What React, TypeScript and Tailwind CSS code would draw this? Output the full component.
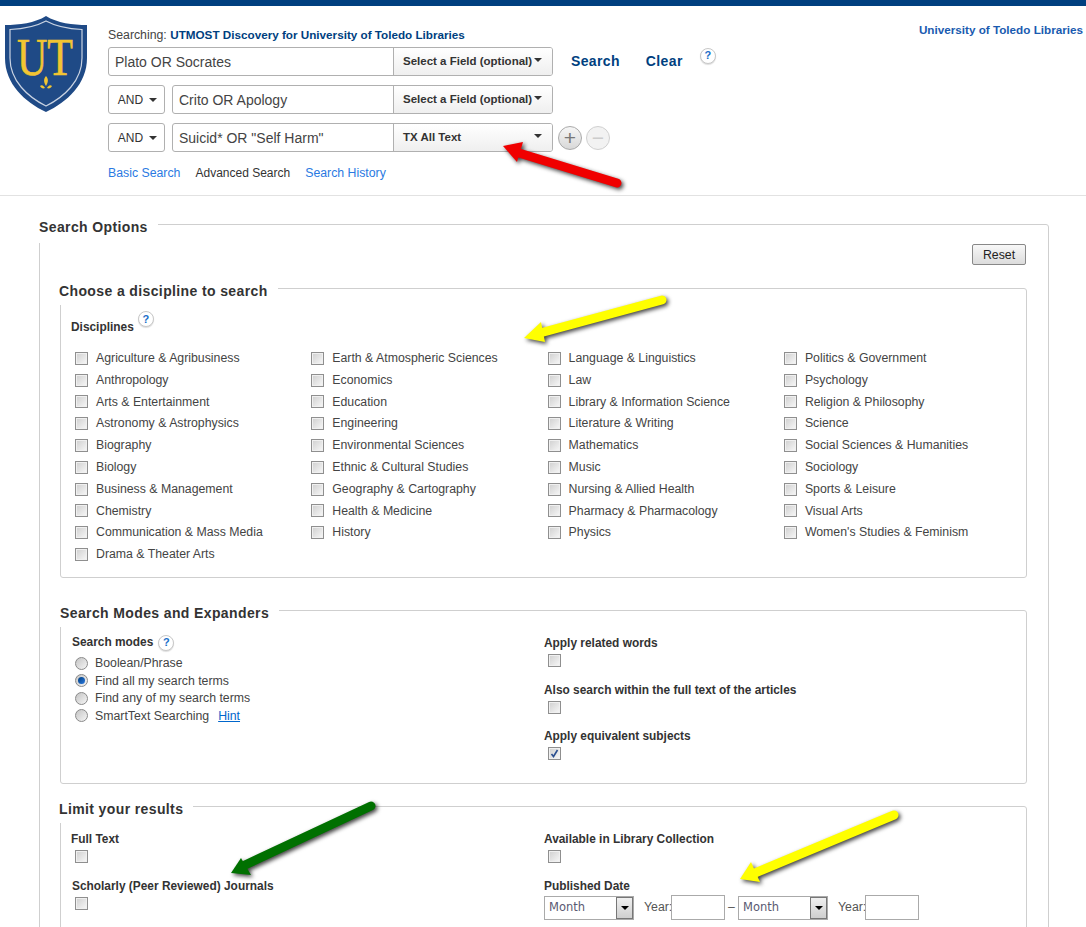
import React from "react";

const columns = [
  ["Agriculture & Agribusiness", "Anthropology", "Arts & Entertainment", "Astronomy & Astrophysics", "Biography", "Biology", "Business & Management", "Chemistry", "Communication & Mass Media", "Drama & Theater Arts"],
  ["Earth & Atmospheric Sciences", "Economics", "Education", "Engineering", "Environmental Sciences", "Ethnic & Cultural Studies", "Geography & Cartography", "Health & Medicine", "History"],
  ["Language & Linguistics", "Law", "Library & Information Science", "Literature & Writing", "Mathematics", "Music", "Nursing & Allied Health", "Pharmacy & Pharmacology", "Physics"],
  ["Politics & Government", "Psychology", "Religion & Philosophy", "Science", "Social Sciences & Humanities", "Sociology", "Sports & Leisure", "Visual Arts", "Women's Studies & Feminism"],
];

const Checkbox = ({ checked }: { checked?: boolean }) => (
  <span className="flex h-[13px] w-[13px] shrink-0 items-center justify-center border border-[#8f8f8f] bg-gradient-to-br from-[#cfcfcf] to-[#f8f8f8] shadow-[inset_0_0_0_1px_#f0f0f0]">
    {checked && (
      <svg viewBox="0 0 11 11" className="h-[11px] w-[11px]">
        <path d="M2.5 6 L4.5 8.5 L8.5 2" fill="none" stroke="#2b4f8f" strokeWidth="1.6" />
      </svg>
    )}
  </span>
);

const Radio = ({ checked }: { checked?: boolean }) => (
  <span className="flex h-[13px] w-[13px] shrink-0 items-center justify-center rounded-full border border-[#8a8a8a] bg-gradient-to-br from-[#c4c4c4] to-[#f6f6f6]">
    {checked && <span className="h-[7px] w-[7px] rounded-full bg-gradient-to-br from-[#003f7f] to-[#2a7ae2]" />}
  </span>
);

const Help = () => (
  <span className="flex h-[16px] w-[16px] items-center justify-center rounded-full border border-[#c8c8c8] bg-white text-[11px] font-bold leading-none text-[#1a6fc9] shadow-[0_1px_1px_#ddd]">
    ?
  </span>
);

const Caret = () => <span className="block h-0 w-0 border-x-[4px] border-t-[4px] border-x-transparent border-t-[#333]" />;

const Section = ({ title, legendClass, className, children }: { title: string; legendClass: string; className: string; children: React.ReactNode }) => (
  <div className={`rounded-[3px] border border-[#cfcfcf] ${className}`}>
    <div className={`w-fit bg-white pr-[10px] text-[14px] font-bold leading-[18px] tracking-[0.38px] text-[#333] ${legendClass}`}>{title}</div>
    {children}
  </div>
);

const FieldSelect = ({ label }: { label: string }) => (
  <div className="flex h-full w-[159px] shrink-0 items-center justify-between border-l border-[#b0b0b0] bg-gradient-to-b from-white to-[#efefef] pl-[9px] pr-[10px] text-[11.5px] font-bold text-[#333]">
    <span className="whitespace-nowrap pt-[1px]">{label}</span>
    <span className="-mt-[4px]">
      <Caret />
    </span>
  </div>
);

const SearchBox = ({ text, label, width }: { text: string; label: string; width: string }) => (
  <div className={`flex h-[29px] items-center overflow-hidden rounded-[3px] border border-[#b0b0b0] ${width}`}>
    <div className="flex-1 pl-[6px] pt-[1px] text-[14px] text-[#444]">{text}</div>
    <FieldSelect label={label} />
  </div>
);

const AndButton = () => (
  <div className="flex h-[29px] w-[57px] items-center justify-center gap-[6px] rounded-[3px] border border-[#b0b0b0] bg-white pl-[2px] pt-[1px] text-[12px] text-[#333]">
    AND <Caret />
  </div>
);

const Shield = () => (
  <svg viewBox="0 0 82 96" className="h-[96px] w-[82px] shrink-0">
    <path d="M41 0 C52 7 68 9 82 9 L82 42 C82 68 62 86 41 96 C20 86 0 68 0 42 L0 9 C14 9 30 7 41 0Z" fill="#1f4a86" />
    <path d="M41 5 C52 11 66 13 77 13.500 L77 42 C77 65 59 81 41 90 C23 81 5 65 5 42 L5 13.500 C16 13 30 11 41 5Z" fill="none" stroke="#c9d3e2" strokeWidth="1.200" />
    <text x="12" y="59" fontFamily="Liberation Serif" fontSize="53" textLength="56" lengthAdjust="spacingAndGlyphs" fill="#f2c532" stroke="#f2c532" strokeWidth="0.6">UT</text>
    <path d="M41 60 C38 63 39 67 41 70 C43 67 44 63 41 60Z M35 70 C37 68 39 70 40 72 C38 73 36 72 35 70Z M47 70 C45 68 43 70 42 72 C44 73 46 72 47 70Z" fill="#f2c532" />
  </svg>
);

const Arrows = () => (
  <svg viewBox="0 0 1086 927" className="pointer-events-none absolute left-0 top-0 h-[927px] w-[1086px] drop-shadow-[2px_2px_2px_rgba(0,0,0,0.75)]">
    <g strokeLinecap="round">
      <line x1="617" y1="183" x2="519" y2="153" stroke="#f00000" strokeWidth="9" />
      <polygon points="503,146 523,142 517,162" fill="#f00000" />
      <line x1="662" y1="300" x2="540" y2="333" stroke="#ffff00" strokeWidth="9" />
      <polygon points="524,338 541,322 545,342" fill="#ffff00" />
      <line x1="894" y1="815" x2="755" y2="873" stroke="#ffff00" strokeWidth="9" />
      <polygon points="740,879 751,862 760,882" fill="#ffff00" />
      <line x1="371" y1="806" x2="245" y2="865" stroke="#007000" strokeWidth="9" />
      <polygon points="231,873 241,858 251,875" fill="#007000" />
    </g>
  </svg>
);

function MonthSelect() {
  return (
    <div className="flex h-[24px] w-[90px] items-center justify-between border border-[#aaa] pl-[4px]">
      <span>Month</span>
      <span className="flex h-[22px] w-[17px] items-center justify-center border border-[#777] bg-gradient-to-b from-[#f0f0f0] to-[#cfcfcf]">
        <span className="h-0 w-0 border-x-[4px] border-t-[4px] border-x-transparent border-t-black" />
      </span>
    </div>
  );
}

const Label = ({ children, className }: { children: React.ReactNode; className?: string }) => (
  <div className={`text-[11.9px] font-bold leading-[14px] text-[#333] ${className ?? ""}`}>{children}</div>
);

export default function App() {
  return (
    <div className="relative h-[927px] w-[1086px] overflow-hidden bg-white font-['Liberation_Sans',Arial,sans-serif] text-[12.3px] text-[#444]">
      <div className="h-[6px] bg-[#003f7f]" />

      <header className="flex h-[190px] border-b border-[#e2e2e2] pl-[5px] pr-[3px]">
        <div className="pt-[10px]">
          <Shield />
        </div>
        <div className="ml-[21px] w-[620px] pt-[21px]">
          <div className="h-[20px] leading-[16px]">
            Searching: <span className="text-[11.7px] font-bold text-[#003f7f]">UTMOST Discovery for University of Toledo Libraries</span>
          </div>
          <div className="flex h-[29px] items-center">
            <SearchBox text="Plato OR Socrates" label="Select a Field (optional)" width="w-[445px]" />
            <span className="ml-[18px] text-[14px] font-bold tracking-[0.35px] text-[#003f7f]">Search</span>
            <span className="ml-[26px] text-[14px] font-bold tracking-[0.4px] text-[#003f7f]">Clear</span>
            <span className="-mt-[12px] ml-[17px]">
              <Help />
            </span>
          </div>
          <div className="mt-[9px] flex gap-[7px]">
            <AndButton />
            <SearchBox text="Crito OR Apology" label="Select a Field (optional)" width="w-[381px]" />
          </div>
          <div className="mt-[9px] flex items-center gap-[7px]">
            <AndButton />
            <SearchBox text={'Suicid* OR "Self Harm"'} label="TX All Text" width="w-[381px]" />
            <div className="-ml-[2px] flex gap-[4px]">
              <span className="flex h-[24px] w-[24px] items-center justify-center rounded-full border border-[#aaa] bg-gradient-to-b from-[#f6f6f6] to-[#d8d8d8] text-[21px] leading-none text-[#777]">+</span>
              <span className="flex h-[24px] w-[24px] items-center justify-center rounded-full border border-[#d0d0d0] bg-[#f2f2f2] text-[21px] leading-none text-[#ccc]">−</span>
            </div>
          </div>
          <div className="mt-[12px] flex gap-[15px]">
            <span className="text-[#2a7ae2]">Basic Search</span>
            <span className="text-[12px] text-[#333]">Advanced Search</span>
            <span className="text-[#2a7ae2]">Search History</span>
          </div>
        </div>
        <div className="ml-auto pt-[15px] text-[11.7px] font-bold text-[#1a5bb0]">University of Toledo Libraries</div>
      </header>

      <main className="pl-[39px] pt-[28px]">
        <Section title="Search Options" legendClass="-ml-[21px] -mt-[7px] h-[25px]" className="h-[800px] w-[1010px] pl-[20px] pr-[21px]">
          <div className="flex justify-end pr-[1px] pt-[1px]">
            <div className="flex h-[21px] w-[54px] items-center justify-center rounded-[2px] border border-[#888] bg-gradient-to-b from-[#f8f8f8] to-[#dcdcdc] pt-[1px] text-[#222]">Reset</div>
          </div>

          <Section title="Choose a discipline to search" legendClass="-ml-[2px] -mt-[7px] h-[23px]" className="mt-[23px] h-[290px]">
            <div className="flex items-start pl-[10px] pt-[8px]">
              <span className="mt-[6px] text-[11.9px] font-bold text-[#333]">Disciplines</span>
              <span className="ml-[4px] -mt-[2px]">
                <Help />
              </span>
            </div>
            <div className="ml-[14px] mt-[10.5px] flex">
              {columns.map((col, i) => (
                <div key={i} className="w-[236.3px]">
                  {col.map((name) => (
                    <div key={name} className="flex h-[21.8px] items-center gap-[8px]">
                      <Checkbox />
                      <span>{name}</span>
                    </div>
                  ))}
                </div>
              ))}
            </div>
          </Section>

          <Section title="Search Modes and Expanders" legendClass="-ml-px -mt-[7px] h-[23px]" className="mt-[32px] h-[174px]">
            <div className="flex pl-[11px] pt-[7px]">
              <div className="w-[472px]">
                <div className="flex items-center gap-[5px] text-[11.9px] font-bold text-[#333]">
                  Search modes <Help />
                </div>
                <div className="ml-[3px] mt-[3px]">
                  <div className="flex h-[17px] items-center gap-[7px]"><Radio /> Boolean/Phrase</div>
                  <div className="flex h-[18px] items-center gap-[7px]"><Radio checked /> Find all my search terms</div>
                  <div className="flex h-[17px] items-center gap-[7px]"><Radio /> Find any of my search terms</div>
                  <div className="flex h-[18px] items-center gap-[7px]">
                    <Radio /> SmartText Searching <a className="ml-[2px] text-[#0066cc] underline">Hint</a>
                  </div>
                </div>
              </div>
              <div className="pt-[2px]">
                <Label>Apply related words</Label>
                <div className="ml-[4px] mt-[4px]"><Checkbox /></div>
                <Label className="mt-[16px]">Also search within the full text of the articles</Label>
                <div className="ml-[4px] mt-[4px]"><Checkbox /></div>
                <Label className="mt-[15px]">Apply equivalent subjects</Label>
                <div className="ml-[4px] mt-[4px]"><Checkbox checked /></div>
              </div>
            </div>
          </Section>

          <Section title="Limit your results" legendClass="-ml-[2px] -mt-[7px] h-[23px]" className="mt-[22px] h-[200px]">
            <div className="flex pl-[10px] pt-[9px]">
              <div className="w-[473px]">
                <Label>Full Text</Label>
                <div className="ml-[4px] mt-[4px]"><Checkbox /></div>
                <Label className="ml-[1px] mt-[16px]">Scholarly (Peer Reviewed) Journals</Label>
                <div className="ml-[4px] mt-[4px]"><Checkbox /></div>
              </div>
              <div>
                <Label>Available in Library Collection</Label>
                <div className="ml-[4px] mt-[4px]"><Checkbox /></div>
                <Label className="mt-[16px]">Published Date</Label>
                <div className="mt-[2px] flex items-center font-['DejaVu_Sans',sans-serif] text-[11.5px] text-[#5a5a72]">
                  <MonthSelect />
                  <span className="ml-[10px] w-[27px] whitespace-nowrap font-['Liberation_Sans',Arial,sans-serif] text-[12.3px] text-[#555]">Year:</span>
                  <span className="h-[25px] w-[54px] border border-[#aaa]" />
                  <span className="mx-[3px] w-[7px] font-['Liberation_Sans',Arial,sans-serif] text-[12.3px] text-[#555]">–</span>
                  <MonthSelect />
                  <span className="ml-[10px] w-[27px] whitespace-nowrap font-['Liberation_Sans',Arial,sans-serif] text-[12.3px] text-[#555]">Year:</span>
                  <span className="h-[25px] w-[54px] border border-[#aaa]" />
                </div>
              </div>
            </div>
          </Section>
        </Section>
      </main>

      <Arrows />
    </div>
  );
}
